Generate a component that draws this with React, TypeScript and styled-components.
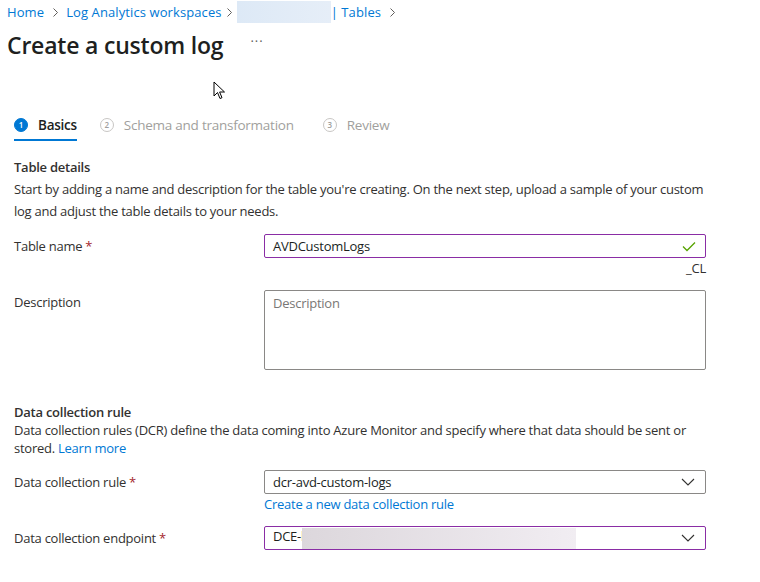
import React from "react";
import styled, { createGlobalStyle } from "styled-components";

const Global = createGlobalStyle`
  html, body { margin: 0; padding: 0; background: #fff; }
  body { font-family: "Open Sans", "Noto Sans", sans-serif; color: #323130; }
  * { box-sizing: border-box; }
`;

const Page = styled.div`
  position: relative;
  width: 760px;
  height: 582px;
  overflow: hidden;
  font-size: 13px;
  letter-spacing: -0.25px;
`;

const Breadcrumb = styled.nav`
  display: flex;
  align-items: center;
  height: 24px;
  padding-left: 7px;
  font-size: 13px;
  letter-spacing: 0.1px;
`;

const Crumb = styled.a`
  color: #0078d4;
  text-decoration: none;
  white-space: nowrap;
`;

const Sep = styled.span<{ $w?: number }>`
  display: inline-flex;
  width: ${(p) => p.$w ?? 22}px;
  justify-content: center;
  align-items: center;
`;

const Redacted = styled.span<{ $w: number; $from: string; $to: string; $h: number }>`
  display: inline-block;
  width: ${(p) => p.$w}px;
  height: ${(p) => p.$h}px;
  background: linear-gradient(90deg, ${(p) => p.$from}, ${(p) => p.$to});
`;

const TitleRow = styled.div`
  display: flex;
  align-items: center;
  height: 40px;
  margin-top: 1px;
  padding-left: 7px;
`;

const Title = styled.h1`
  margin: 0;
  font-size: 23px;
  font-weight: 600;
  letter-spacing: -0.2px;
  color: #201f1e;
`;

const More = styled.span`
  margin-left: 27px;
  color: #605e5c;
  font-size: 13px;
  letter-spacing: 1px;
  position: relative;
  top: -4px;
`;

const Steps = styled.div`
  display: flex;
  margin-top: 47px;
  padding-left: 14px;
`;

const Step = styled.div<{ $active?: boolean; $gap: number }>`
  display: flex;
  align-items: center;
  gap: 10px;
  height: 29px;
  margin-right: ${(p) => p.$gap}px;
  padding-bottom: 2px;
  border-bottom: 2px solid ${(p) => (p.$active ? "#0078d4" : "transparent")};
  color: ${(p) => (p.$active ? "#201f1e" : "#a19f9d")};
  font-size: 13.5px;
  font-weight: ${(p) => (p.$active ? 600 : 400)};
`;

const StepNum = styled.span<{ $active?: boolean }>`
  display: inline-flex;
  align-items: center;
  justify-content: center;
  width: 14px;
  height: 14px;
  border-radius: 50%;
  font-size: 8px;
  font-weight: 600;
  letter-spacing: 0;
  background: ${(p) => (p.$active ? "#0078d4" : "#fff")};
  color: ${(p) => (p.$active ? "#fff" : "#a19f9d")};
  border: 1px solid ${(p) => (p.$active ? "#0078d4" : "#c8c6c4")};
`;

const Section = styled.section<{ $top: number }>`
  padding: 0 14px;
  margin-top: ${(p) => p.$top}px;
`;

const SectionTitle = styled.div`
  font-weight: 600;
  font-size: 13px;
  line-height: 18px;
`;

const SectionText = styled.p<{ $lh: number }>`
  margin: 0;
  width: 700px;
  line-height: ${(p) => p.$lh}px;
  margin-top: ${(p) => (p.$lh > 20 ? 2 : 0)}px;
`;

const Link = styled.a`
  color: #0078d4;
  text-decoration: none;
`;

const Row = styled.div<{ $top: number }>`
  display: grid;
  grid-template-columns: 250px 442px;
  margin-top: ${(p) => p.$top}px;
`;

const Label = styled.div`
  line-height: 24px;
`;

const Req = styled.span`
  color: #a4262c;
  margin-left: 3px;
`;

const Field = styled.div<{ $focus?: boolean }>`
  display: flex;
  align-items: center;
  height: 24px;
  padding: 0 8px;
  border: 1px solid ${(p) => (p.$focus ? "#8a2da5" : "#8a8886")};
  border-radius: 2px;
  background: #fff;
`;

const TextArea = styled.div`
  height: 80px;
  padding: 4px 8px;
  border: 1px solid #8a8886;
  border-radius: 2px;
  color: #797775;
  line-height: 17px;
`;

const Value = styled.span`
  flex: 1;
  color: #201f1e;
  white-space: nowrap;
`;

const Suffix = styled.div`
  text-align: right;
  line-height: 18px;
  margin-top: 1px;
`;

const SubLink = styled(Link)`
  display: block;
  line-height: 20px;
`;

const Cursor = styled.svg`
  position: absolute;
  left: 213px;
  top: 81px;
`;

const Chevron = () => (
  <svg width="7" height="11" viewBox="0 0 7 11">
    <polyline points="1.5,1.5 5.5,5.5 1.5,9.5" fill="none" stroke="#605e5c" strokeWidth="1" />
  </svg>
);

const DropChevron = () => (
  <svg width="14" height="8" viewBox="0 0 14 8" style={{ marginRight: 2 }}>
    <polyline points="1,1 7,7 13,1" fill="none" stroke="#323130" strokeWidth="1.1" />
  </svg>
);

const Check = () => (
  <svg width="14" height="11" viewBox="0 0 14 11" style={{ marginRight: 1 }}>
    <polyline points="1,5.5 5,9.5 13,1.5" fill="none" stroke="#57a300" strokeWidth="1.3" />
  </svg>
);

export default function App() {
  return (
    <Page>
      <Global />
      <Breadcrumb>
        <Crumb>Home</Crumb>
        <Sep><Chevron /></Sep>
        <Crumb>Log Analytics workspaces</Crumb>
        <Sep $w={15}><Chevron /></Sep>
        <Redacted $w={94} $h={22} $from="#dde9f6" $to="#e6eef8" />
        <Crumb>| Tables</Crumb>
        <Sep><Chevron /></Sep>
      </Breadcrumb>

      <TitleRow>
        <Title>Create a custom log</Title>
        <More>···</More>
      </TitleRow>

      <Cursor width="13" height="20" viewBox="0 0 13 20">
        <path d="M1 1 L1 15 L4.5 11.5 L7 17.5 L9 16.7 L6.6 11 L11.5 11 Z" fill="#fff" stroke="#000" strokeWidth="1" strokeLinejoin="round" />
      </Cursor>

      <Steps>
        <Step $active $gap={23}>
          <StepNum $active>1</StepNum>
          Basics
        </Step>
        <Step $gap={29}>
          <StepNum>2</StepNum>
          Schema and transformation
        </Step>
        <Step $gap={0}>
          <StepNum>3</StepNum>
          Review
        </Step>
      </Steps>

      <Section $top={17}>
        <SectionTitle>Table details</SectionTitle>
        <SectionText $lh={22}>
          Start by adding a name and description for the table you're creating. On the next step, upload a sample of your custom log and adjust the table details to your needs.
        </SectionText>

        <Row $top={12}>
          <Label>
            Table name<Req>*</Req>
          </Label>
          <div>
            <Field $focus>
              <Value>AVDCustomLogs</Value>
              <Check />
            </Field>
            <Suffix>_CL</Suffix>
          </div>
        </Row>

        <Row $top={13}>
          <Label>Description</Label>
          <TextArea>Description</TextArea>
        </Row>
      </Section>

      <Section $top={33}>
        <SectionTitle>Data collection rule</SectionTitle>
        <SectionText $lh={18}>
          Data collection rules (DCR) define the data coming into Azure Monitor and specify where that data should be sent or stored. <Link>Learn more</Link>
        </SectionText>

        <Row $top={13}>
          <Label>
            Data collection rule<Req>*</Req>
          </Label>
          <div>
            <Field>
              <Value>dcr-avd-custom-logs</Value>
              <DropChevron />
            </Field>
            <SubLink>Create a new data collection rule</SubLink>
          </div>
        </Row>

        <Row $top={12}>
          <Label>
            Data collection endpoint<Req>*</Req>
          </Label>
          <Field $focus>
            <Value>
              DCE-l
              <Redacted $w={274} $h={21} $from="#dcd7dc" $to="#f1edf2" style={{ verticalAlign: "middle", marginLeft: -2 }} />
            </Value>
            <DropChevron />
          </Field>
        </Row>
      </Section>
    </Page>
  );
}
